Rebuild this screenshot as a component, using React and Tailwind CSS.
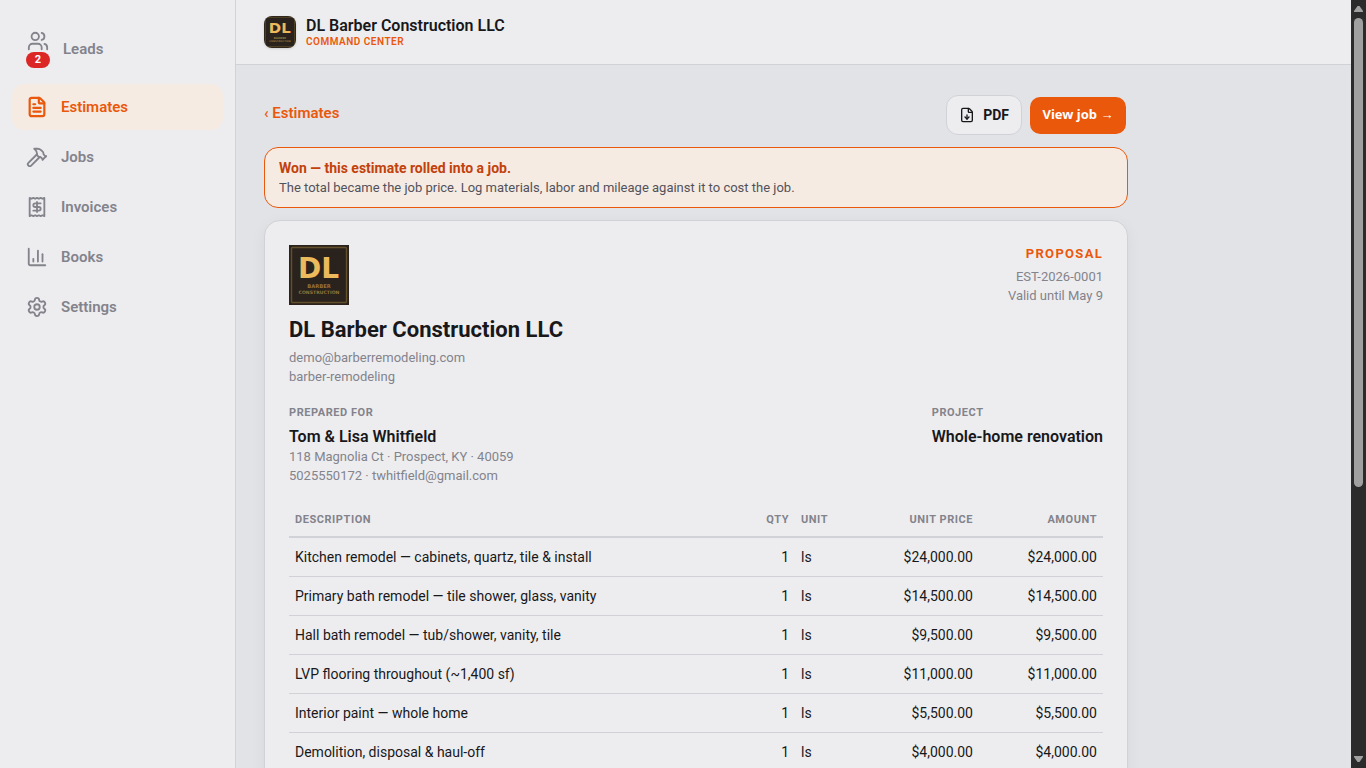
import React from 'react';
import { ChartColumn, FileDown, FileText, Hammer, Receipt, Settings, Users } from 'lucide-react';

const NAV = [
  { label: 'Leads', icon: Users, badge: 2 },
  { label: 'Estimates', icon: FileText, active: true },
  { label: 'Jobs', icon: Hammer },
  { label: 'Invoices', icon: Receipt },
  { label: 'Books', icon: ChartColumn },
  { label: 'Settings', icon: Settings },
];

const ITEMS = [
  { desc: 'Kitchen remodel — cabinets, quartz, tile & install', qty: 1, unit: 'ls', price: '$24,000.00' },
  { desc: 'Primary bath remodel — tile shower, glass, vanity', qty: 1, unit: 'ls', price: '$14,500.00' },
  { desc: 'Hall bath remodel — tub/shower, vanity, tile', qty: 1, unit: 'ls', price: '$9,500.00' },
  { desc: 'LVP flooring throughout (~1,400 sf)', qty: 1, unit: 'ls', price: '$11,000.00' },
  { desc: 'Interior paint — whole home', qty: 1, unit: 'ls', price: '$5,500.00' },
  { desc: 'Demolition, disposal & haul-off', qty: 1, unit: 'ls', price: '$4,000.00' },
];

const Logo = ({ className }) => (
  <svg viewBox="0 0 60 60" className={className} role="img" aria-label="DL Barber Construction">
    <rect width="60" height="60" fill="#2a221c" />
    <rect x="2.5" y="2.5" width="55" height="55" rx="1" fill="none" stroke="#63502a" strokeWidth="1.4" />
    <g textAnchor="middle" fontFamily="DejaVu Sans" fontWeight="700">
      <text x="29.5" y="32.5" fontSize="28" fill="#ecba5c">DL</text>
      <text x="30" y="43" fontSize="5.2" fill="#94743a">BARBER</text>
      <text x="30" y="48.5" fontSize="4.6" fill="#94743a">CONSTRUCTION</text>
    </g>
  </svg>
);

const NavItem = ({ label, icon: Icon, active, badge }) => (
  <a
    href="#"
    aria-current={active ? 'page' : undefined}
    className={`flex items-center gap-[13px] rounded-xl px-3.5 py-3 text-[15px] leading-[22px] font-semibold ${active ? 'bg-[#f6ebe2] text-[#ea580c]' : 'text-[#83838c]'}`}
  >
    <span className="flex flex-col items-center">
      <Icon size={22} strokeWidth={active ? 2.4 : 2} />
      {badge && (
        <span className="h-4 w-6 rounded-full bg-[#dc2626] text-center text-[11px] leading-4 font-bold text-white">
          {badge}
        </span>
      )}
    </span>
    {label}
  </a>
);

const Sidebar = () => (
  <aside className="w-[236px] shrink-0 border-r border-[#d1d2d8] bg-[#ededef] px-3 pt-[18px]">
    <nav className="flex flex-col gap-1">
      {NAV.map((item) => (
        <NavItem key={item.label} {...item} />
      ))}
    </nav>
  </aside>
);

const Header = () => (
  <header className="flex h-[65px] shrink-0 items-center gap-2.5 border-b border-[#d1d2d8] bg-[#ededef] px-7">
    <Logo className="h-8 w-8 rounded-lg shadow-sm" />
    <div>
      <p className="text-base leading-5 font-semibold">DL Barber Construction LLC</p>
      <p className="text-[10px] leading-3 font-semibold tracking-wider text-[#ea580c]">COMMAND CENTER</p>
    </div>
  </header>
);

const LineItems = () => (
  <table className="mt-[17px] w-full border-collapse text-sm">
    <thead>
      <tr className="border-b-2 border-[#d1d2d8] text-[11px] leading-4 tracking-wider text-[#83838c]">
        <th className="px-1.5 pt-2.5 pb-2 text-left font-bold">DESCRIPTION</th>
        <th className="w-10 px-1.5 pt-2.5 pb-2 text-right font-bold">QTY</th>
        <th className="w-16 px-1.5 pt-2.5 pb-2 text-left font-bold">UNIT</th>
        <th className="w-30 px-1.5 pt-2.5 pb-2 text-right font-bold">UNIT PRICE</th>
        <th className="w-31 px-1.5 pt-2.5 pb-2 text-right font-bold">AMOUNT</th>
      </tr>
    </thead>
    <tbody>
      {ITEMS.map((item) => (
        <tr key={item.desc} className="border-b border-[#d1d2d8]">
          <td className="px-1.5 py-[9px]">{item.desc}</td>
          <td className="px-1.5 py-[9px] text-right">{item.qty}</td>
          <td className="px-1.5 py-[9px]">{item.unit}</td>
          <td className="px-1.5 py-[9px] text-right">{item.price}</td>
          <td className="px-1.5 py-[9px] text-right">{item.price}</td>
        </tr>
      ))}
    </tbody>
  </table>
);

const Proposal = () => (
  <article className="mt-3 rounded-2xl border border-[#d1d2d8] bg-[#ededef] p-6 shadow-[0_4px_16px_rgba(0,0,0,0.05)]">
    <div className="flex items-start justify-between text-[13px] leading-[19px] text-[#83838c]">
      <div>
        <Logo className="h-15 w-15" />
        <h1 className="mt-[11px] mb-1 text-[22px] leading-7 font-bold text-[#18181b]">DL Barber Construction LLC</h1>
        <p>demo@barberremodeling.com</p>
        <p>barber-remodeling</p>
      </div>
      <div className="text-right">
        <p className="mb-1 text-[13px] leading-[18px] font-bold tracking-widest text-[#ea580c]">PROPOSAL</p>
        <p>EST-2026-0001</p>
        <p>Valid until May 9</p>
      </div>
    </div>

    <div className="mt-[19px] flex justify-between text-[13px] leading-[19px] text-[#83838c]">
      <div>
        <h2 className="text-[11px] leading-4 font-bold tracking-wider">PREPARED FOR</h2>
        <p className="mt-1.5 text-base leading-5 font-semibold text-[#18181b]">Tom &amp; Lisa Whitfield</p>
        <p>118 Magnolia Ct · Prospect, KY · 40059</p>
        <p>5025550172 · twhitfield@gmail.com</p>
      </div>
      <div>
        <h2 className="text-[11px] leading-4 font-bold tracking-wider">PROJECT</h2>
        <p className="mt-1.5 text-base leading-5 font-semibold text-[#18181b]">Whole-home renovation</p>
      </div>
    </div>

    <LineItems />
  </article>
);

const Scrollbar = () => (
  <div className="flex w-[15px] shrink-0 flex-col items-center justify-between bg-[#2b2b2b] py-1.5" aria-hidden="true">
    <svg viewBox="0 0 9 6" className="h-1.5 w-[9px] shrink-0 fill-[#a0a0a0]"><path d="M3.5 0h2L9 5v1H0V5z" /></svg>
    <div className="mt-1.5 h-[469px] w-[9px] rounded-full bg-[#a0a0a0]" />
    <div className="grow" />
    <svg viewBox="0 0 9 6" className="h-1.5 w-[9px] shrink-0 fill-[#a0a0a0]"><path d="M0 0h9v1L5.5 6h-2L0 1z" /></svg>
  </div>
);

const App = () => (
  <div className="flex h-screen overflow-hidden bg-[#e2e3e7] font-['Roboto',sans-serif] text-[#18181b]">
    <Sidebar />
    <div className="flex min-w-0 flex-1 flex-col">
      <Header />
      <main className="min-h-0 flex-1 overflow-hidden px-7 pt-[30px]">
        <div className="max-w-[864px]">
          <div className="flex items-center justify-between pr-0.5">
            <a href="#" className="pb-1 text-[15px] leading-5 font-semibold text-[#ea580c]">‹ Estimates</a>
            <div className="flex items-center gap-2">
              <button className="flex h-10 items-center gap-2 rounded-xl border border-[#d1d2d8] bg-[#ededef] px-3 text-sm font-bold">
                <FileDown size={16} />
                PDF
              </button>
              <button className="h-[37px] w-24 rounded-[10px] bg-[#ea580c] font-['Noto_Sans',sans-serif] text-[13px] font-bold text-white">
                View job →
              </button>
            </div>
          </div>

          <div className="mt-3 rounded-[14px] border border-[#ea580c] bg-[#f6ebe2] px-3.5 py-2.5">
            <p className="text-sm leading-5 font-bold text-[#c2410c]">Won — this estimate rolled into a job.</p>
            <p className="text-[13px] leading-[19px] text-[#52525b]">
              The total became the job price. Log materials, labor and mileage against it to cost the job.
            </p>
          </div>

          <Proposal />
        </div>
      </main>
    </div>
    <Scrollbar />
  </div>
);

export default App;
